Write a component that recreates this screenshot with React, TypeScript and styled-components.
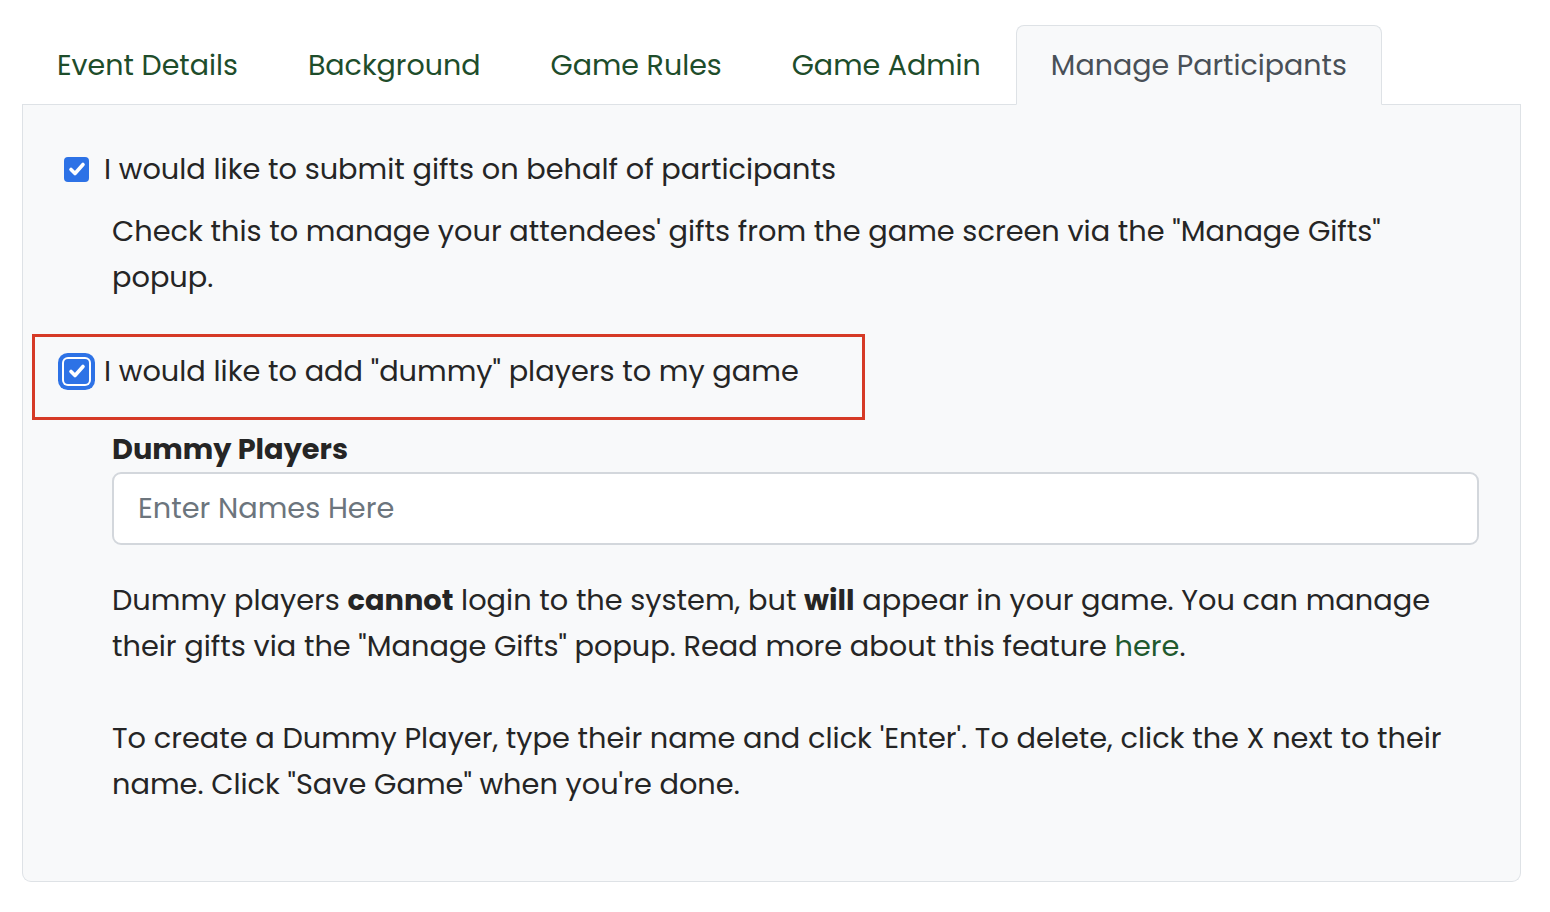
import React from "react";
import styled, { createGlobalStyle } from "styled-components";

const Global = createGlobalStyle`
  html, body { margin: 0; padding: 0; background: #ffffff; }
  body { font-family: "Poppins", "Open Sans", "Noto Sans", sans-serif; color: #252525; }
  * { box-sizing: border-box; }
`;

const Page = styled.div`
  padding: 25px 29px 30px 22px;
`;

const TabList = styled.div`
  display: flex;
  border-bottom: 1px solid #dee2e6;
`;

const Tab = styled.div<{ $active?: boolean }>`
  padding: 17px 34px 16px;
  font-size: 28.5px;
  line-height: 45px;
  margin-bottom: -1px;
  border: 1px solid ${(p) => (p.$active ? "#dee2e6" : "transparent")};
  border-bottom-color: ${(p) => (p.$active ? "#f8f9fa" : "transparent")};
  border-radius: 8px 8px 0 0;
  background: ${(p) => (p.$active ? "#f8f9fa" : "transparent")};
  color: ${(p) => (p.$active ? "#495057" : "#1e4d2b")};
  white-space: nowrap;
`;

const Panel = styled.div`
  background: #f8f9fa;
  border: 1px solid #dee2e6;
  border-top: none;
  border-radius: 0 0 9px 9px;
  padding: 41px 41px 74px 41px;
  height: 777px;
`;

const CheckRow = styled.label`
  position: relative;
  display: flex;
  align-items: center;
  gap: 15px;
  font-size: 28.8px;
  line-height: 46px;
`;

const Box = styled.span<{ $focus?: boolean }>`
  width: 25px;
  height: 25px;
  flex: none;
  border-radius: 4px;
  background: #2d72e6;
  display: flex;
  align-items: center;
  justify-content: center;
  box-shadow: ${(p) => (p.$focus ? "0 0 0 2px #ffffff, 0 0 0 6px #2d72e6" : "none")};
`;

const Highlight = styled.span`
  position: absolute;
  left: -32px;
  top: -14px;
  width: 833px;
  height: 86px;
  border: 3px solid #d63a26;
  pointer-events: none;
`;

const Indented = styled.div<{ $top?: number }>`
  margin-left: 48px;
  margin-top: ${(p) => p.$top ?? 0}px;
`;

const Text = styled.p`
  margin: 0;
  font-size: 28.8px;
  line-height: 46px;
`;

const Label = styled.div`
  font-size: 28.8px;
  line-height: 46px;
  font-weight: 700;
`;

const Input = styled.div`
  height: 73px;
  background: #ffffff;
  border: 2px solid #d3d7dc;
  border-radius: 9px;
  padding: 0 24px;
  display: flex;
  align-items: center;
  font-size: 28.8px;
  color: #6c757d;
`;

const Link = styled.a`
  color: #1f5a2e;
  text-decoration: none;
`;

const Check = () => (
  <svg width="20" height="20" viewBox="0 0 20 20" fill="none">
    <path d="M4 10.5 L8 14.5 L16 5.5" stroke="#ffffff" strokeWidth="3.6" strokeLinecap="round" strokeLinejoin="round" />
  </svg>
);

const tabs = ["Event Details", "Background", "Game Rules", "Game Admin", "Manage Participants"];

export default function App() {
  return (
    <Page>
      <Global />
      <TabList>
        {tabs.map((t, i) => (
          <Tab key={t} $active={i === 4}>
            {t}
          </Tab>
        ))}
      </TabList>
      <Panel>
        <CheckRow>
          <Box><Check /></Box>
          I would like to submit gifts on behalf of participants
        </CheckRow>
        <Indented $top={16}>
          <Text>
            Check this to manage your attendees' gifts from the game screen via the "Manage Gifts" popup.
          </Text>
        </Indented>
        <CheckRow style={{ marginTop: 48 }}>
          <Box $focus><Check /></Box>
          I would like to add "dummy" players to my game
          <Highlight />
        </CheckRow>
        <Indented $top={32}>
          <Label>Dummy Players</Label>
          <Input>Enter Names Here</Input>
          <Text style={{ marginTop: 32 }}>
            Dummy players <b>cannot</b> login to the system, but <b>will</b> appear in your game. You can manage
            their gifts via the "Manage Gifts" popup. Read more about this feature <Link href="#">here</Link>.
          </Text>
          <Text style={{ marginTop: 46 }}>
            To create a Dummy Player, type their name and click 'Enter'. To delete, click the X next to their
            name. Click "Save Game" when you're done.
          </Text>
        </Indented>
      </Panel>
    </Page>
  );
}
